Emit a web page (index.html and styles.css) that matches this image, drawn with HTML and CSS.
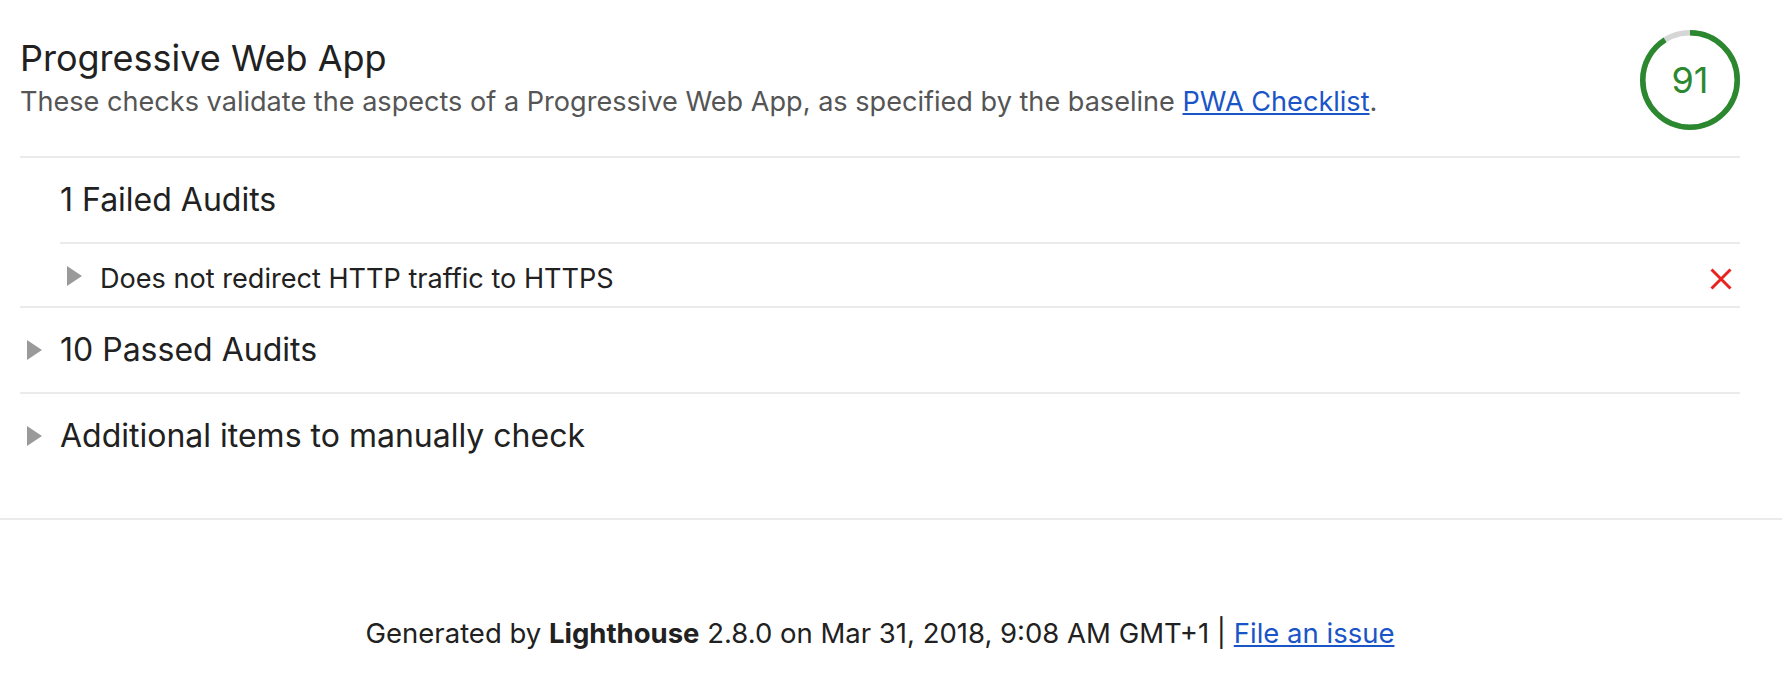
FILE: index.html
```html
<!DOCTYPE html>
<html lang="en">
<head>
<meta charset="utf-8">
<title>Lighthouse Report</title>
<link rel="stylesheet" href="styles.css">
</head>
<body>
<div class="report">
  <section class="category">
    <header class="cat-header">
      <div class="cat-text">
        <h1 class="cat-title">Progressive Web App</h1>
        <p class="cat-desc">These checks validate the aspects of a Progressive Web App, as specified by the baseline <a class="link" href="#">PWA Checklist</a>.</p>
      </div>
      <div class="gauge">
        <svg class="gauge-svg" viewBox="0 0 100 100" width="100" height="100">
          <circle class="gauge-base" cx="50" cy="50" r="47.25"></circle>
          <circle class="gauge-arc" cx="50" cy="50" r="47.25" stroke-dasharray="270.16 400"></circle>
        </svg>
        <span class="gauge-value">91</span>
      </div>
    </header>

    <div class="group">
      <div class="group-title">1 Failed Audits</div>
      <div class="audit-list">
        <div class="audit">
          <svg class="arrow arrow--audit" viewBox="0 0 15 20" width="15" height="20"><polygon points="0,0 15,10 0,20"></polygon></svg>
          <span class="audit-title">Does not redirect HTTP traffic to HTTPS</span>
          <svg class="fail-icon" viewBox="0 0 22 22" width="22" height="22"><path d="M1.5 1.5 L20.5 20.5 M20.5 1.5 L1.5 20.5"></path></svg>
        </div>
      </div>
    </div>

    <div class="group">
      <div class="group-summary">
        <svg class="arrow" viewBox="0 0 15 20" width="15" height="20"><polygon points="0,0 15,10 0,20"></polygon></svg>
        <span>10 Passed Audits</span>
      </div>
    </div>

    <div class="group group--last">
      <div class="group-summary">
        <svg class="arrow" viewBox="0 0 15 20" width="15" height="20"><polygon points="0,0 15,10 0,20"></polygon></svg>
        <span>Additional items to manually check</span>
      </div>
    </div>
  </section>
</div>
<footer class="footer">
  Generated by <b>Lighthouse</b> 2.8.0 on Mar 31, 2018, 9:08 AM GMT+1 | <a class="link" href="#">File an issue</a>
</footer>
</body>
</html>
```
FILE: styles.css
```css
html, body {
  margin: 0;
  padding: 0;
  background: #fff;
}
body {
  font-family: "Inter", "Liberation Sans", sans-serif;
  color: #212121;
}
.report {
  padding: 0 42px 0 20px;
}
.link {
  color: #1a55c8;
  text-decoration: underline;
}

/* category header */
.cat-header {
  display: flex;
  justify-content: space-between;
  align-items: flex-start;
  padding: 30px 0 26px;
  border-bottom: 2px solid #ebebeb;
}
.cat-text {
  padding-top: 6px;
}
.cat-title {
  margin: 0;
  font-size: 36px;
  line-height: 44px;
  font-weight: 400;
  color: #212121;
}
.cat-desc {
  margin: 4px 0 0;
  font-size: 27.1px;
  line-height: 36px;
  color: #555;
}

/* gauge */
.gauge {
  display: grid;
  place-items: center;
  width: 100px;
  height: 100px;
  flex: none;
}
.gauge-svg,
.gauge-value {
  grid-area: 1 / 1;
}
.gauge-svg {
  transform: rotate(-90deg);
}
.gauge-base,
.gauge-arc {
  fill: none;
  stroke-width: 5.5;
}
.gauge-base {
  stroke: #d6d6d6;
}
.gauge-arc {
  stroke: #2b882f;
}
.gauge-value {
  font-size: 36px;
  line-height: 40px;
  color: #2b882f;
}

/* groups */
.group {
  border-bottom: 2px solid #ebebeb;
}
.group--last {
  border-bottom: 0;
  padding-bottom: 40px;
}
.group-title {
  padding: 22px 0 22px 40px;
  font-size: 32px;
  line-height: 40px;
}
.group-summary {
  display: flex;
  align-items: center;
  padding: 22px 0;
  font-size: 32px;
  line-height: 40px;
}
.arrow {
  flex: none;
  margin: 0 18px 0 7px;
  fill: #9a9a9a;
}
.audit-list {
  margin-left: 40px;
}
.audit {
  display: flex;
  align-items: center;
  border-top: 2px solid #ebebeb;
  padding: 17px 8px 9px 0;
  font-size: 27.1px;
  line-height: 36px;
}
.arrow--audit {
  align-self: flex-start;
  margin-top: 5px;
}
.audit-title {
  flex: 1;
}
.fail-icon {
  flex: none;
  stroke: #e8221f;
  stroke-width: 3;
  fill: none;
}

/* footer */
.footer {
  border-top: 2px solid #ebebeb;
  padding: 95px 42px 0 20px;
  text-align: center;
  font-size: 27.5px;
  line-height: 36px;
  color: #212121;
}
.footer b {
  font-weight: 700;
}
```
